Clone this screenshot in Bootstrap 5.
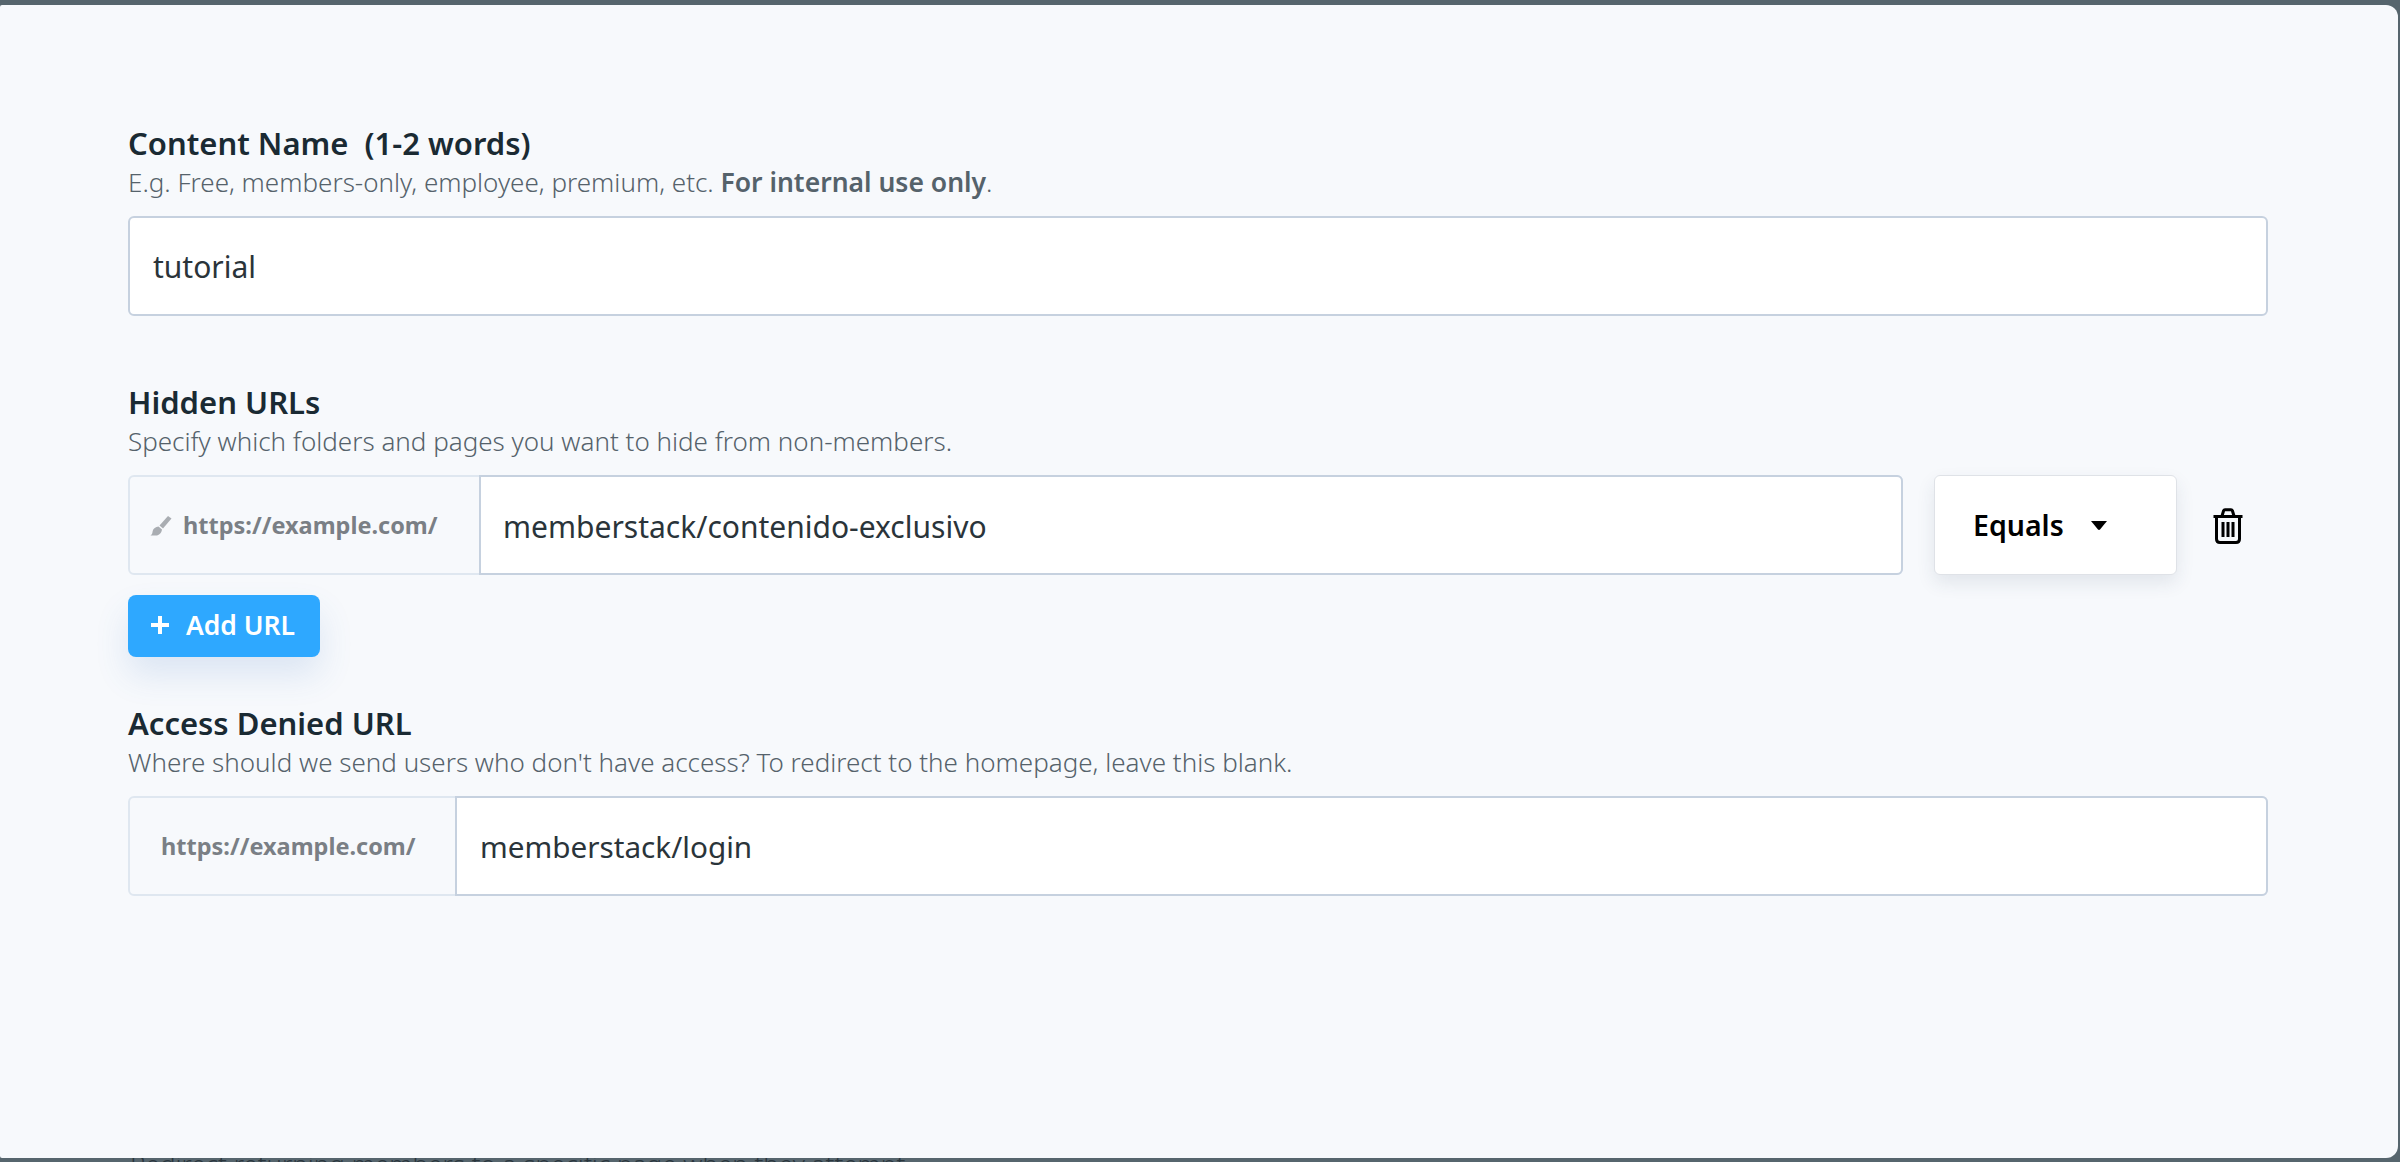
<!DOCTYPE html>
<html lang="en"><head><meta charset="utf-8">
<link rel="stylesheet" href="https://cdn.jsdelivr.net/npm/bootstrap@5.3.0/dist/css/bootstrap.min.css">
<style>
html,body{height:100%;overflow:hidden}
body{background:#56656d;font-family:"Noto Sans",sans-serif;padding-top:5px}
.sheet{background:#f7f9fc;height:1153px;margin-right:2px;border-radius:2px 12px 12px 2px;padding:117px 130px 0 128px;position:relative;z-index:1}
.under{margin:-9px 0 0 130px;font-size:26px;line-height:30px;font-weight:300;color:#2a363d;white-space:nowrap}
.ttl{font-size:31px;line-height:42px;font-weight:600;color:#1a2a33;margin:0 0 1px}
.hint{font-size:26px;line-height:34px;font-weight:300;color:#55626b;margin:0 0 17px}
.hint b{font-weight:600;font-size:26.5px}
.lower{margin-top:65px}
.fieldbox{height:100px;background:#fff;border:2px solid #c6d1df;border-radius:6px;font-size:30px;color:#2a343a;padding:0 23px}
.grp{height:100px;border:2px solid #dfe7f0;border-radius:6px;min-width:0}
.pre{font-size:23.5px;font-weight:700;color:#7a7f85;flex:none;padding-top:2px}
.pre1{width:349px;padding-left:20px;gap:11px}
.pre2{width:325px;padding-left:31px}
.val{height:100px;margin:-2px -2px -2px 0;background:#fff;border:2px solid #c6d1df;border-radius:0 6px 6px 0;font-size:30px;color:#2a343a;padding:2px 23px 0 22px}
.val-b{padding-left:23px;font-size:29.700px}
.eq{width:243px;height:100px;margin-left:31px;background:#fff;border:1px solid #dfe2e7;border-radius:6px;box-shadow:0 8px 18px rgba(40,60,90,.1);font-size:28.5px;font-weight:600;color:#000;padding-left:38px;gap:27px}
.trash{margin:2px 24px 0 35px}
.addb{background:#2ea8ff;color:#fff;border:0;border-radius:8px;width:192px;height:62px;font-size:26.500px;font-weight:600;box-shadow:0 18px 34px rgba(60,110,190,.14);margin:20px 0 45px;padding-right:15px}
.addb:hover{background:#2ea8ff;color:#fff}
.addb svg{margin-top:-3px}
</style></head><body>
<main class="sheet">
  <h2 class="ttl">Content Name&nbsp; (1-2 words)</h2>
  <p class="hint">E.g. Free, members-only, employee, premium, etc. <b>For internal use only</b>.</p>
  <div class="fieldbox d-flex align-items-center">tutorial</div>
  <h2 class="ttl lower">Hidden URLs</h2>
  <p class="hint">Specify which folders and pages you want to hide from non-members.</p>
  <div class="d-flex align-items-center">
    <div class="grp d-flex align-items-center flex-grow-1">
      <div class="pre pre1 d-flex align-items-center">
        <svg width="22" height="22" viewBox="0 0 22 22" fill="#a9adb2"><path d="M18 1l3.500 2.500L13 13.500l-3.500-3z"/><path d="M8.500 11.500l3.500 3c-.5 3.500-3 6-6 6H.5c2-1 1.800-3 2.200-4.500.5-2.500 3-4.300 5.800-4.500z"/></svg>
        <span>https://example.com/</span>
      </div>
      <div class="val d-flex align-items-center flex-grow-1">memberstack/contenido-exclusivo</div>
    </div>
    <div class="eq d-flex align-items-center flex-shrink-0"><span>Equals</span>
      <svg width="16" height="9" viewBox="0 0 16 9"><path fill="#000" d="M0 0h16L9 8.500c-.5.500-1.500.500-2 0z"/></svg>
    </div>
    <div class="trash d-flex flex-shrink-0">
      <svg width="32" height="36" viewBox="0 0 32 36" fill="none" stroke="#000" stroke-width="3"><path d="M1.500 8.500h29M10 8l1.500-5c.2-.8.800-1.300 1.500-1.300h6c.7 0 1.300.5 1.500 1.300L22 8M4.500 8.500V31c0 2.500 1.300 3.500 3.500 3.500h16c2.200 0 3.500-1 3.500-3.500V8.500M11 14v15M16 14v15M21 14v15"/></svg>
    </div>
  </div>
  <button class="addb btn d-flex align-items-center justify-content-center gap-3" type="button">
    <svg width="20" height="20" viewBox="0 0 20 20" fill="#fff"><path d="M8 1h4v7h7v4h-7v7H8v-7H1V8h7z"/></svg>Add URL
  </button>
  <h2 class="ttl">Access Denied URL</h2>
  <p class="hint">Where should we send users who don't have access? To redirect to the homepage, leave this blank.</p>
  <div class="grp d-flex align-items-center">
    <div class="pre pre2">https://example.com/</div>
    <div class="val val-b d-flex align-items-center flex-grow-1">memberstack/login</div>
  </div>
</main>
<p class="under">Redirect returning members to a specific page when they attempt</p>
</body></html>
